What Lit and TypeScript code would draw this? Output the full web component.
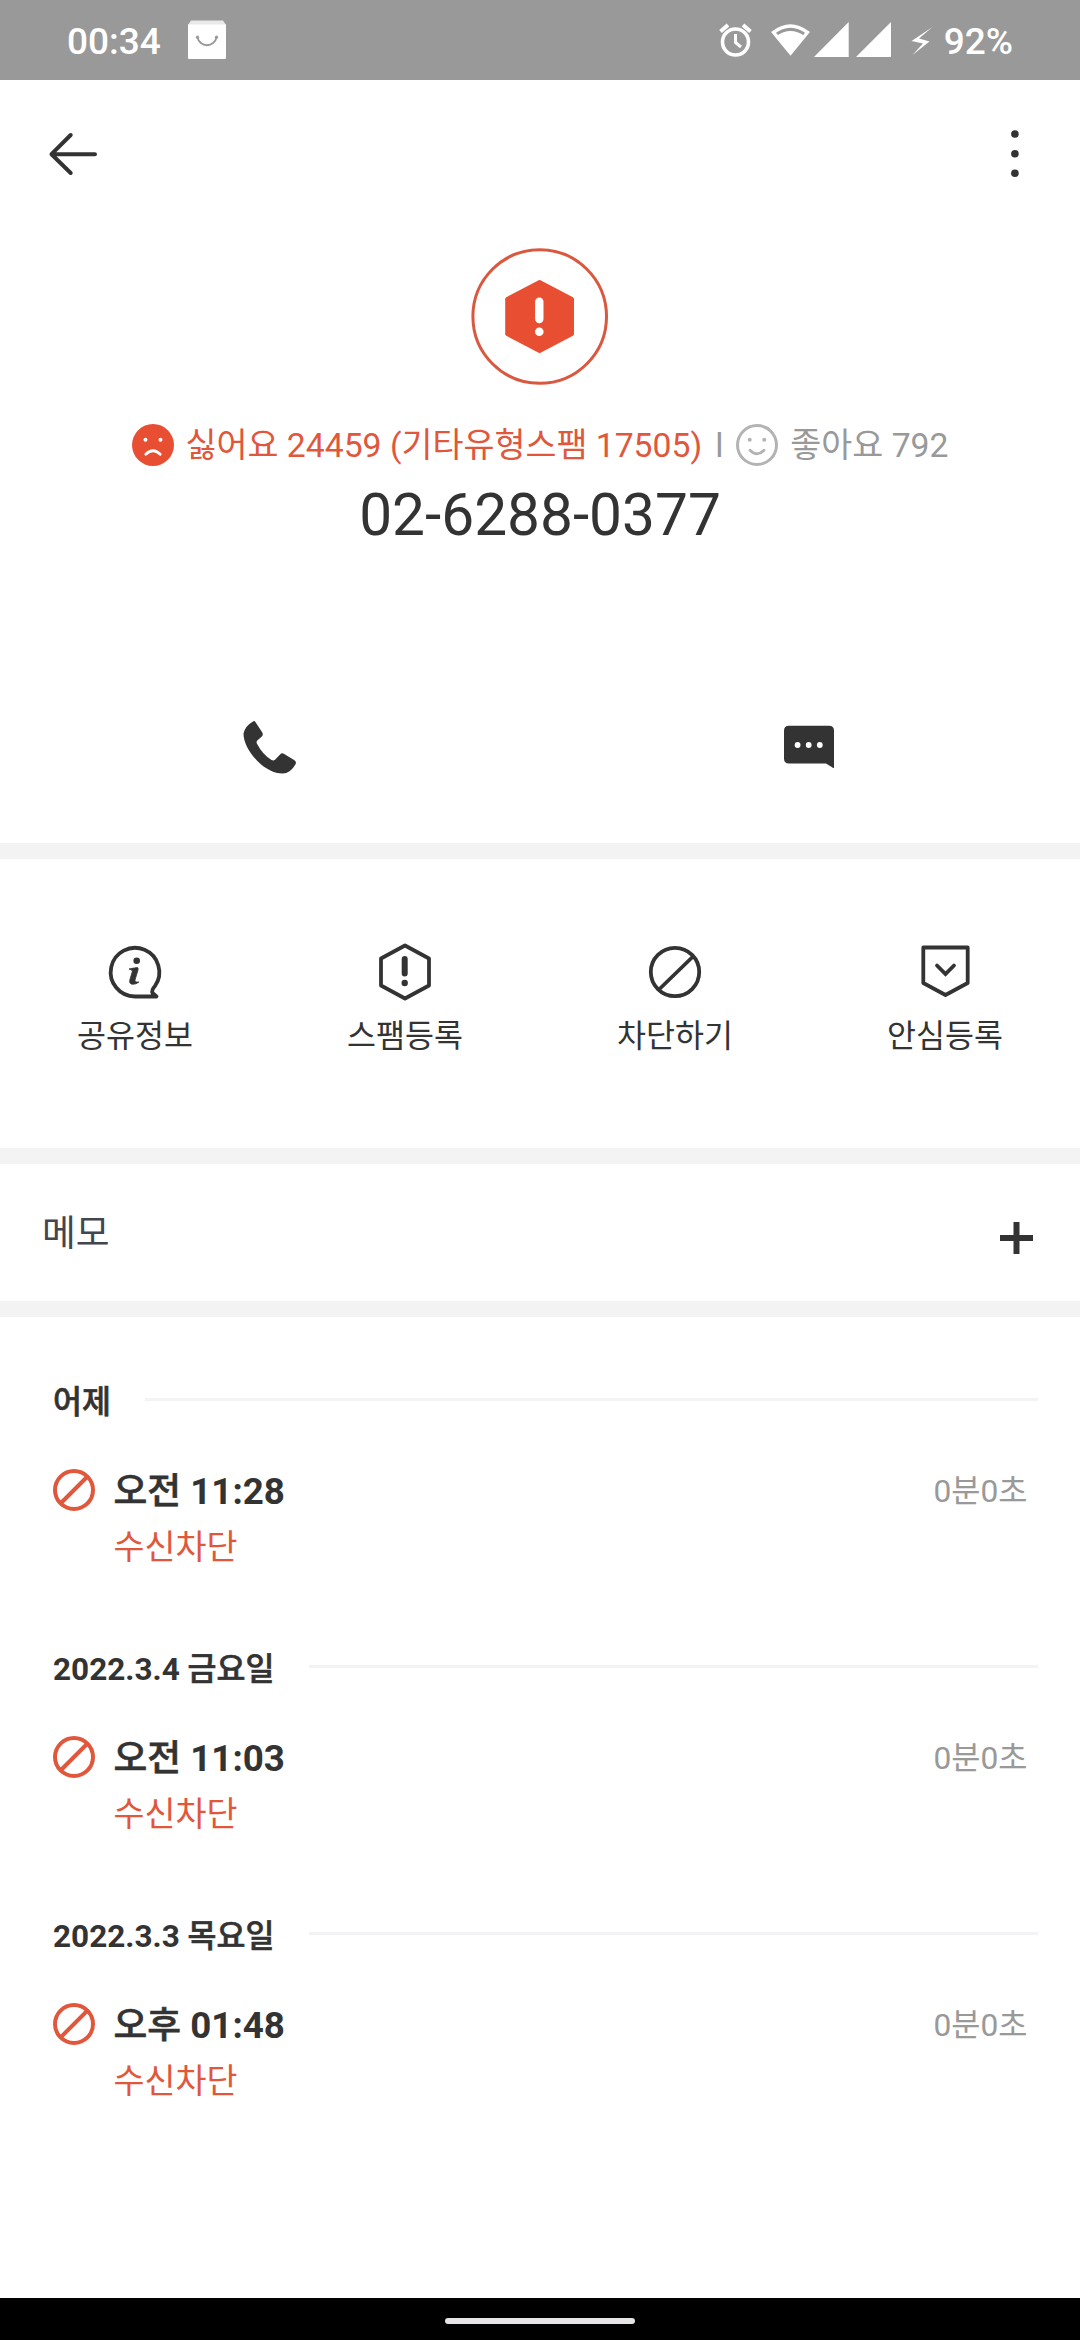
import { LitElement, html, css, svg } from "lit";
import { customElement, property } from "lit/decorators.js";

interface CallRecord {
  date: string;
  time: string;
  status: string;
  duration: string;
}

const blockShape = svg`
  <circle cx="21" cy="21" r="19" fill="none" stroke="currentColor" stroke-width="4" />
  <path d="M7.5 34.5 34.5 7.5" fill="none" stroke="currentColor" stroke-width="4" />
`;

@customElement("status-bar")
class StatusBar extends LitElement {
  static styles = css`
    :host {
      display: flex;
      align-items: center;
      height: 80px;
      box-sizing: border-box;
      padding: 0 67px;
      background: #999;
      color: #fff;
      font-size: 37px;
      font-weight: 500;
      line-height: 44px;
    }
    svg { display: block; }
    .text { padding-top: 3px; }
    .bag { margin-left: 26px; }
    .right { display: flex; align-items: center; margin-left: auto; }
    .signals { margin-right: 9px; }
  `;

  render() {
    return html`
      <span class="text">00:34</span>
      <svg class="bag" width="40" height="40" viewBox="0 0 40 40">
        <path d="M4 0.5h32l3 4.5H1z" fill="#e9e9e9" />
        <path d="M1 4.5h38V38q0 1-1 1H2q-1 0-1-1z" fill="#fff" />
        <path d="M10.5 17.5a9.7 9.7 0 0 0 19 0" fill="none" stroke="#999" stroke-width="1.8" />
        <circle cx="10.5" cy="17.2" r="1.6" fill="#999" />
        <circle cx="29.5" cy="17.2" r="1.6" fill="#999" />
      </svg>
      <div class="right">
        <svg class="signals" width="216" height="40" viewBox="0 0 216 40">
          <g fill="none" stroke="#fff">
            <circle cx="16.5" cy="22" r="13" stroke-width="3.6" />
            <path d="M1.5 11.5 9 5M31.5 11.5 24 5" stroke-width="4" />
            <path d="M16.5 14v8.5l5.5 4.5" stroke-width="3" />
            <path d="M54.5 12.3Q71.5-.5 88.5 12.3L71.5 33Z" stroke-width="3.4" />
          </g>
          <path d="M57.5 16Q71.5 6 85.5 16L71.5 35Z" fill="#fff" />
          <path d="M129.7 2V37H95zM172 2V37H137z" fill="#fff" />
          <path d="M213.500 7 192.500 21 204 23.500 193.500 35 210.500 21.500 200 18.500Z" fill="#fff" />
        </svg>
        <span class="text">92%</span>
      </div>
    `;
  }
}

@customElement("call-group")
class CallGroup extends LitElement {
  @property({ attribute: false }) record!: CallRecord;

  static styles = css`
    :host { display: block; height: 267px; color: #333; }
    .head { display: flex; height: 42px; padding: 0 42px 0 53px; gap: 34px; }
    .date { font-size: 31.5px; font-weight: 700; line-height: 42px; white-space: nowrap; }
    .date.hangul, .day, .meridiem { font-weight: 500; -webkit-text-stroke: 0.6px #333; }
    .rule { flex: 1; height: 3px; margin-top: 15.5px; background: #f3f3f5; }
    .entry { display: flex; align-items: flex-start; padding: 44.5px 52.5px 0 53px; }
    .icon { display: block; color: #e0573c; }
    .body { margin-left: 18.5px; flex: 1; }
    .time { font-size: 36.75px; line-height: 46px; font-weight: 700; }
    .state { font-size: 33.7px; line-height: 42px; margin-top: 12.5px; color: #e0573c; }
    .duration { font-size: 31.7px; line-height: 46px; color: #999; }
  `;

  render() {
    const { date, time, status, duration } = this.record;
    const [first, rest] = date.split(" ");
    const [meridiem, clock] = time.split(" ");
    return html`
      <div class="head">
        ${rest
          ? html`<span class="date">${first} <span class="day">${rest}</span></span>`
          : html`<span class="date hangul">${first}</span>`}
        <div class="rule"></div>
      </div>
      <div class="entry">
        <svg class="icon" width="42" height="42" viewBox="0 0 42 42">${blockShape}</svg>
        <div class="body">
          <div class="time"><span class="meridiem">${meridiem}</span> ${clock}</div>
          <div class="state">${status}</div>
        </div>
        <div class="duration">${duration}</div>
      </div>
    `;
  }
}

@customElement("app-root")
class AppRoot extends LitElement {
  static styles = css`
    :host {
      display: flex;
      flex-direction: column;
      width: 1080px;
      height: 2340px;
      background: #fff;
      color: #333;
      font-family: Roboto, "Noto Sans CJK KR", sans-serif;
      overflow: hidden;
    }
    svg { display: block; flex: none; }
    .toolbar {
      display: flex;
      align-items: center;
      justify-content: space-between;
      height: 147px;
      padding: 0 59px 0 48px;
    }
    .hero { display: flex; flex-direction: column; align-items: center; padding-top: 21px; }
    .rating {
      display: flex;
      align-items: center;
      height: 42px;
      margin-top: 39px;
      font-size: 33.7px;
      line-height: 42px;
      white-space: nowrap;
      color: #999;
    }
    .rating span { padding-top: 2px; }
    .rating .bad { color: #e0573c; margin-left: 12px; }
    .rating .sep { margin: 0 13px; }
    .rating .good { margin-left: 12px; }
    .number { margin-top: 15px; font-size: 58.6px; line-height: 68px; }
    .quick { display: grid; grid-template-columns: 1fr 1fr; justify-items: center; height: 126px; padding-top: 168px; }
    .band { height: 16px; background: #f3f3f3; flex: none; }
    .actions { display: grid; grid-template-columns: repeat(4, 1fr); height: 206px; padding-top: 83px; }
    .action { display: flex; flex-direction: column; align-items: center; }
    .label { margin-top: 14px; font-size: 31.5px; line-height: 42px; }
    .memo { display: flex; align-items: center; justify-content: space-between; height: 137px; padding: 0 47px 0 42px; }
    .memo-title { font-size: 36.75px; line-height: 46px; padding-top: 3px; color: #424650; }
    .memo-add { margin-top: 11px; }
    .history { flex: 1; padding-top: 65px; }
    .nav { display: flex; justify-content: center; height: 42px; background: #000; }
    .pill { width: 190px; height: 6px; margin-top: 20px; border-radius: 3px; background: #e6e4e6; }
  `;

  private records: CallRecord[] = [
    { date: "어제", time: "오전 11:28", status: "수신차단", duration: "0분0초" },
    { date: "2022.3.4 금요일", time: "오전 11:03", status: "수신차단", duration: "0분0초" },
    { date: "2022.3.3 목요일", time: "오후 01:48", status: "수신차단", duration: "0분0초" },
  ];

  private actions = [
    {
      label: "공유정보",
      icon: svg`
        <path d="M51.5 54.5H30A24.300 24.300 0 1 1 50 44Q46.300 48 47.500 51L51.500 54.500Z" stroke-linejoin="round" />
        <circle cx="31.700" cy="18.700" r="3.300" fill="#333" stroke="none" />
        <path d="M24 27Q31 25.500 32.500 25.500Q33.500 26 33 28L30 38Q29.500 40.500 34 40Q31 42.500 27.500 42.300Q24 42 24.800 38L27.300 29.500Q27.500 27.500 24 27Z" fill="#333" stroke-width="0.800" />
      `,
    },
    {
      label: "스팸등록",
      icon: svg`
        <path d="M30 3.500 54 16.500V43.500L30 56.500 6 43.500V16.500Z" stroke-linejoin="round" />
        <path d="M29.700 17V31.500" stroke-width="6" stroke-linecap="round" />
        <circle cx="29.700" cy="41" r="3.200" fill="#333" stroke="none" />
      `,
    },
    {
      label: "차단하기",
      icon: svg`
        <circle cx="30" cy="30" r="24.200" />
        <path d="M14 47.500 48 14.500" />
      `,
    },
    {
      label: "안심등록",
      icon: svg`
        <path d="M8.300 5.500H52.700V41L30.500 53 8.300 41Z" stroke-linejoin="round" />
        <path d="M22 23.500 30.500 32 39 23.500" stroke-linecap="round" />
      `,
    },
  ];

  render() {
    return html`
      <status-bar></status-bar>
      <div class="toolbar">
        <svg width="50" height="44" viewBox="0 0 50 44">
          <path d="M22.700 3 3.500 22.200 22.700 41M3.500 22.200H47" fill="none" stroke="#333" stroke-width="4" stroke-linecap="round" stroke-linejoin="round" />
        </svg>
        <svg width="12" height="50" viewBox="0 0 12 50">
          <g fill="#333">
            <circle cx="5.900" cy="5" r="3.800" />
            <circle cx="5.900" cy="24.700" r="3.800" />
            <circle cx="5.900" cy="44.300" r="3.800" />
          </g>
        </svg>
      </div>

      <div class="hero">
        <svg width="138" height="137" viewBox="0 0 138 137">
          <circle cx="68.700" cy="68.500" r="66.800" fill="none" stroke="#d9583f" stroke-width="3" />
          <path d="M68.600 34 101 51V86L68.600 103 36.200 86V51Z" fill="#e84f32" stroke="#e84f32" stroke-width="4" stroke-linejoin="round" />
          <path d="M68.300 53.800V71" stroke="#fff" stroke-width="8.400" stroke-linecap="round" />
          <circle cx="68.300" cy="83.700" r="4.300" fill="#fff" />
        </svg>
        <div class="rating">
          <svg width="42" height="42" viewBox="0 0 42 42">
            <circle cx="21" cy="21" r="21" fill="#e84f32" />
            <circle cx="13.500" cy="15.700" r="2" fill="#fff" />
            <circle cx="28.500" cy="15.700" r="2" fill="#fff" />
            <path d="M13.800 30.300Q21 23.300 28.200 30.300" fill="none" stroke="#fff" stroke-width="2.800" stroke-linecap="round" />
          </svg>
          <span class="bad">싫어요 24459 (기타유형스팸 17505)</span>
          <span class="sep">l</span>
          <svg width="42" height="42" viewBox="0 0 42 42">
            <circle cx="21" cy="21" r="19.500" fill="none" stroke="#b3b3b3" stroke-width="3" />
            <circle cx="13.700" cy="15.700" r="2" fill="#b3b3b3" />
            <circle cx="28.300" cy="15.700" r="2" fill="#b3b3b3" />
            <path d="M14 26.300Q21 33.300 28 26.300" fill="none" stroke="#b3b3b3" stroke-width="2.800" stroke-linecap="round" />
          </svg>
          <span class="good">좋아요 792</span>
        </div>
        <div class="number">02-6288-0377</div>
      </div>

      <div class="quick">
        <svg width="60" height="60" viewBox="0 0 60 60">
          <path d="M13 4.400Q14.300 3.200 15.400 5L22.300 15.600Q23.500 17.700 21.800 19.500L17.300 23.500Q16 24.700 17 26.800Q22.500 37.500 31.500 43Q33.500 44 35 42.700L40.300 37.200Q42 35.500 44.200 37L54.500 43.300Q56.800 45 55.500 47.300Q50.500 56.500 42.500 56.500C24 56.500 3.500 33 3.500 16.500Q5 9 13 4.400Z" fill="#333" />
        </svg>
        <svg width="60" height="60" viewBox="0 0 60 60">
          <path d="M9 8.700H49Q54 8.700 54 13.700V50.500Q53.500 51.500 52.500 50.500L46 46.500H9Q4 46.500 4 41.500V13.700Q4 8.700 9 8.700Z" fill="#333" />
          <g fill="#fff">
            <circle cx="17.600" cy="28" r="2.900" />
            <circle cx="28.700" cy="28" r="2.900" />
            <circle cx="39.800" cy="28" r="2.900" />
          </g>
        </svg>
      </div>

      <div class="band"></div>
      <div class="actions">
        ${this.actions.map(
          (a) => html`
            <div class="action">
              <svg width="60" height="60" viewBox="0 0 60 60" fill="none" stroke="#333" stroke-width="3.800">${a.icon}</svg>
              <span class="label">${a.label}</span>
            </div>
          `,
        )}
      </div>
      <div class="band"></div>

      <div class="memo">
        <span class="memo-title">메모</span>
        <svg class="memo-add" width="33" height="32" viewBox="0 0 33 32">
          <path d="M0 16H33M16.500 0V32" stroke="#333" stroke-width="6" />
        </svg>
      </div>
      <div class="band"></div>

      <div class="history">
        ${this.records.map((r) => html`<call-group .record=${r}></call-group>`)}
      </div>
      <div class="nav"><div class="pill"></div></div>
    `;
  }
}
